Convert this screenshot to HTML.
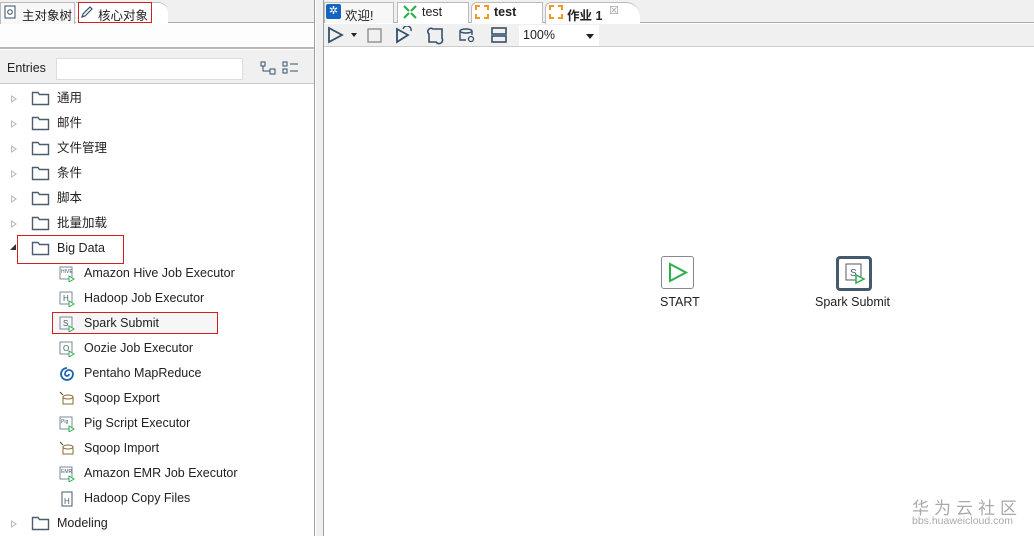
<!DOCTYPE html>
<html><head><meta charset="utf-8"><style>
*{margin:0;padding:0;box-sizing:border-box}
body{width:1034px;height:536px;overflow:hidden;background:#fff;font-family:"Liberation Sans","Noto Sans CJK SC",sans-serif;font-size:12px;color:#222;position:relative}
.a{position:absolute}
.row{position:absolute;height:25px;line-height:25px;font-size:12.5px;white-space:nowrap}
.tri{position:absolute;left:11px;top:9px;width:0;height:0;border-left:6px solid #bbb;border-top:4px solid transparent;border-bottom:4px solid transparent}
.tri:after{content:"";position:absolute;left:-5px;top:-2px;border-left:3px solid #fff;border-top:2px solid transparent;border-bottom:2px solid transparent}
.fold{position:absolute;left:31px;top:4px;width:19px;height:16px}
.ic{position:absolute;left:59px;top:5px;width:16px;height:16px}
</style></head><body>
<!-- left panel -->
<div class="a" style="left:0;top:0;width:315px;height:536px;background:#fff;border-right:1px solid #a0a0a0"></div>
<div class="a" style="left:0;top:0;width:314px;height:23px;background:#f0f0f0;border-bottom:1px solid #aaa"></div>
<div class="a" style="left:0;top:2px;width:75px;height:22px;background:#f7f7f7;border:1px solid #bbb;border-bottom:none"></div>
<svg class="a" style="left:4px;top:5px" width="12" height="14"><rect x="1" y="1" width="10" height="12" fill="#fff" stroke="#34506a"/><circle cx="6" cy="7" r="2.3" fill="none" stroke="#34506a"/></svg>
<div class="a" style="left:22px;top:5px;font-size:12.5px">主对象树</div>
<div class="a" style="left:76px;top:2px;width:92px;height:22px;background:#fff;border-top:1px solid #bbb;border-radius:0 10px 0 0"></div>
<div class="a" style="left:78px;top:2px;width:74px;height:21px;border:1px solid #d02020"></div>
<svg class="a" style="left:80px;top:5px" width="14" height="14"><path d="M2 12 L3 9 L10 2 L12 4 L5 11 Z" fill="none" stroke="#34506a" stroke-width="1.2"/></svg>
<div class="a" style="left:98px;top:5px;font-size:12.5px">核心对象</div>
<div class="a" style="left:0;top:24px;width:314px;height:25px;background:#fdfdfd;border-bottom:2px solid #b8b8b8"></div>
<div class="a" style="left:0;top:50px;width:314px;height:34px;background:#f0f0f0;border-bottom:1px solid #ccc"></div>
<div class="a" style="left:7px;top:61px;font-size:12.5px">Entries</div>
<div class="a" style="left:56px;top:58px;width:187px;height:22px;background:#fff;border:1px solid #ddd"></div>
<svg class="a" style="left:260px;top:61px" width="16" height="14"><rect x="1" y="1" width="4" height="4" fill="none" stroke="#34506a"/><rect x="10" y="8" width="5" height="5" fill="none" stroke="#34506a"/><path d="M3 5 V10 H10" fill="none" stroke="#34506a"/></svg>
<svg class="a" style="left:282px;top:61px" width="18" height="14"><rect x="1" y="1" width="4" height="4" fill="none" stroke="#34506a"/><rect x="1" y="8" width="4" height="4" fill="none" stroke="#34506a"/><path d="M8 3H16M8 10H16" stroke="#34506a"/></svg>

<div id="folders"></div>
<div class="a" style="left:17px;top:235px;width:107px;height:29px;border:1px solid #d02020"></div>

<div class="a" style="left:52px;top:312px;width:166px;height:22px;border:1px solid #d02020;background:#f6f6f6"></div>
<div id="items"></div>

<!-- splitter -->
<div class="a" style="left:316px;top:0;width:8px;height:536px;background:#f0f0f0;border-right:1px solid #a0a0a0"></div>

<!-- right tabs -->
<div class="a" style="left:324px;top:0;width:710px;height:23px;background:#f0f0f0;border-bottom:1px solid #aaa"></div>
<div class="a" style="left:324px;top:2px;width:70px;height:21px;background:#f7f7f7;border:1px solid #bbb;border-bottom:none"></div>
<div class="a" style="left:397px;top:2px;width:72px;height:21px;background:#fff;border:1px solid #bbb;border-bottom:none"></div>
<div class="a" style="left:471px;top:2px;width:72px;height:21px;background:#fff;border:1px solid #bbb;border-bottom:none;border-radius:6px 0 0 0"></div>
<div class="a" style="left:545px;top:2px;width:95px;height:22px;background:#fff;border-top:1px solid #bbb;border-left:1px solid #bbb;border-radius:6px 14px 0 0"></div>
<div class="a" style="left:326px;top:4px;width:15px;height:15px;background:#1565c0;border-radius:2px;color:#fff;font-size:11px;line-height:15px;text-align:center">✲</div>
<div class="a" style="left:345px;top:5px;font-size:12.5px">欢迎!</div>
<svg class="a" style="left:402px;top:4px" width="16" height="16"><path d="M2 2L7 7M14 2L9 7M2 14L7 9M14 14L9 9" stroke="#2bb04b" stroke-width="2.2"/></svg>
<div class="a" style="left:422px;top:5px;font-size:12.5px">test</div>
<svg class="a" style="left:474px;top:4px" width="16" height="16"><path d="M2 6V2H6M10 2H14V6M14 10V14H10M6 14H2V10" fill="none" stroke="#f39a1e" stroke-width="2"/></svg>
<div class="a" style="left:494px;top:5px;font-size:12.5px;font-weight:bold">test</div>
<svg class="a" style="left:548px;top:4px" width="16" height="16"><path d="M2 6V2H6M10 2H14V6M14 10V14H10M6 14H2V10" fill="none" stroke="#f39a1e" stroke-width="2"/></svg>
<div class="a" style="left:567px;top:5px;font-size:12.5px;font-weight:bold">作业 1</div>
<div class="a" style="left:609px;top:4px;font-size:11px;color:#999">☒</div>

<!-- toolbar -->
<div class="a" style="left:324px;top:24px;width:710px;height:23px;background:#f0f0f0;border-bottom:1px solid #ccc"></div>
<svg class="a" style="left:326px;top:26px" width="280" height="20">
<path d="M3 2 L16 9 L3 16 Z" fill="none" stroke="#34506a" stroke-width="1.8"/>
<path d="M25 7 L31 7 L28 11 Z" fill="#222"/>
<rect x="42" y="3" width="13" height="13" fill="none" stroke="#888" stroke-width="1.3"/>
<path d="M71 3 L82 9 L71 16 Z" fill="none" stroke="#34506a" stroke-width="1.8"/><path d="M77 3 a4 4 0 0 1 8 2" fill="none" stroke="#34506a" stroke-width="1.5"/>
<path d="M107 3 H116 V12 A3 3 0 0 1 110 16 H103 V8 A3 3 0 0 1 107 3 Z" fill="none" stroke="#34506a" stroke-width="1.6"/>
<ellipse cx="140" cy="5" rx="6" ry="2" fill="none" stroke="#34506a" stroke-width="1.4"/><path d="M134 5 V14 H140 M146 5 V9" fill="none" stroke="#34506a" stroke-width="1.4"/><circle cx="145" cy="13" r="2.5" fill="none" stroke="#34506a" stroke-width="1.3"/>
<rect x="166" y="2" width="14" height="6" fill="none" stroke="#34506a" stroke-width="1.6"/><rect x="166" y="10" width="14" height="6" fill="none" stroke="#34506a" stroke-width="1.6"/>
</svg>
<div class="a" style="left:519px;top:25px;width:80px;height:21px;background:#fff"></div>
<div class="a" style="left:523px;top:28px;font-size:12.5px">100%</div>
<div class="a" style="left:586px;top:34px;border-top:5px solid #222;border-left:4px solid transparent;border-right:4px solid transparent"></div>

<!-- canvas -->
<div class="a" style="left:661px;top:256px;width:33px;height:33px;border:1px solid #888;border-radius:3px;background:#fff"></div>
<svg class="a" style="left:661px;top:256px" width="33" height="33"><path d="M9 8 L25 16.5 L9 25 Z" fill="none" stroke="#2bb04b" stroke-width="2"/></svg>
<div class="a" style="left:660px;top:295px;font-size:12.5px">START</div>
<div class="a" style="left:836px;top:256px;width:36px;height:35px;border:3px solid #44596b;border-radius:4px;background:#fff"></div>
<svg class="a" style="left:839px;top:259px" width="30" height="29"><rect x="7" y="5" width="15" height="16" fill="none" stroke="#556"/><text x="11" y="17" font-size="10" fill="#44596b" font-family="Liberation Sans">S</text><path d="M17 16 L25 20 L17 24 Z" fill="#fff" stroke="#2bb04b" stroke-width="1.5"/></svg>
<div class="a" style="left:815px;top:295px;font-size:12.5px">Spark Submit</div>

<div class="a" style="left:912px;top:494px;font-size:17px;color:#aaa;letter-spacing:5px">华为云社区</div>
<div class="a" style="left:912px;top:515px;font-size:10.5px;color:#aaa">bbs.huaweicloud.com</div>

<script>
var F='<svg class="fold" viewBox="0 0 19 16"><path d="M1.5 2.5H7L8.5 4.5H17.5V14.5H1.5Z" fill="none" stroke="#4a5e70" stroke-width="1.4"/></svg>';
var fl=[[86,"通用",0],[111,"邮件",0],[136,"文件管理",0],[161,"条件",0],[186,"脚本",0],[211,"批量加载",0],[236,"Big Data",1],[511,"Modeling",0]];
var g="";
fl.forEach(function(f){g+='<div class="row" style="top:'+f[0]+'px;left:0;width:314px">'+(f[2]?'<div class="a" style="left:10px;top:8px;width:0;height:0;border-right:6px solid #333;border-top:6px solid transparent"></div>':'<div class="tri"></div>')+F+'<span class="a" style="left:57px">'+f[1]+'</span></div>';});
document.getElementById("folders").innerHTML=g;
var it=[["Amazon Hive Job Executor","HIVE"],["Hadoop Job Executor","H"],["Spark Submit","S"],["Oozie Job Executor","O"],["Pentaho MapReduce","@"],["Sqoop Export","sq"],["Pig Script Executor","Pig"],["Sqoop Import","sq"],["Amazon EMR Job Executor","EMR"],["Hadoop Copy Files","Hc"]];
var h="";
it.forEach(function(e,i){var t=261+i*25;var ic;
if(e[1]=="@")ic='<svg class="ic" viewBox="0 0 16 16"><path d="M8 2A6 6 0 1 0 14 8A4 4 0 1 0 6 8A2 2 0 1 0 10 8" fill="none" stroke="#1d64b0" stroke-width="1.8"/></svg>';
else if(e[1]=="sq")ic='<svg class="ic" viewBox="0 0 16 16"><ellipse cx="9" cy="6" rx="5" ry="2" fill="none" stroke="#8a6a30"/><path d="M4 6V13H14V6" fill="none" stroke="#8a6a30"/><path d="M1 1L4 4" stroke="#444"/></svg>';
else if(e[1]=="Hc")ic='<svg class="ic" viewBox="0 0 16 16"><rect x="3" y="1" width="10" height="14" fill="none" stroke="#44596b"/><text x="5" y="13" font-size="8" fill="#44596b">H</text></svg>';
else ic='<svg class="ic" viewBox="0 0 16 16"><rect x="1" y="1" width="12" height="12" fill="none" stroke="#7a8a9a"/><text x="'+(e[1].length>1?2:4)+'" y="'+(e[1].length>1?7:10)+'" font-size="'+(e[1].length>1?5:8)+'" fill="#44596b">'+e[1]+'</text><path d="M10 10L15 13L10 16Z" fill="#fff" stroke="#2bb04b"/></svg>';
h+='<div class="row" style="top:'+t+'px;left:0;width:314px">'+ic+'<span class="a" style="left:84px">'+e[0]+'</span></div>';});
document.getElementById("items").innerHTML=h;
</script>
</body></html>
